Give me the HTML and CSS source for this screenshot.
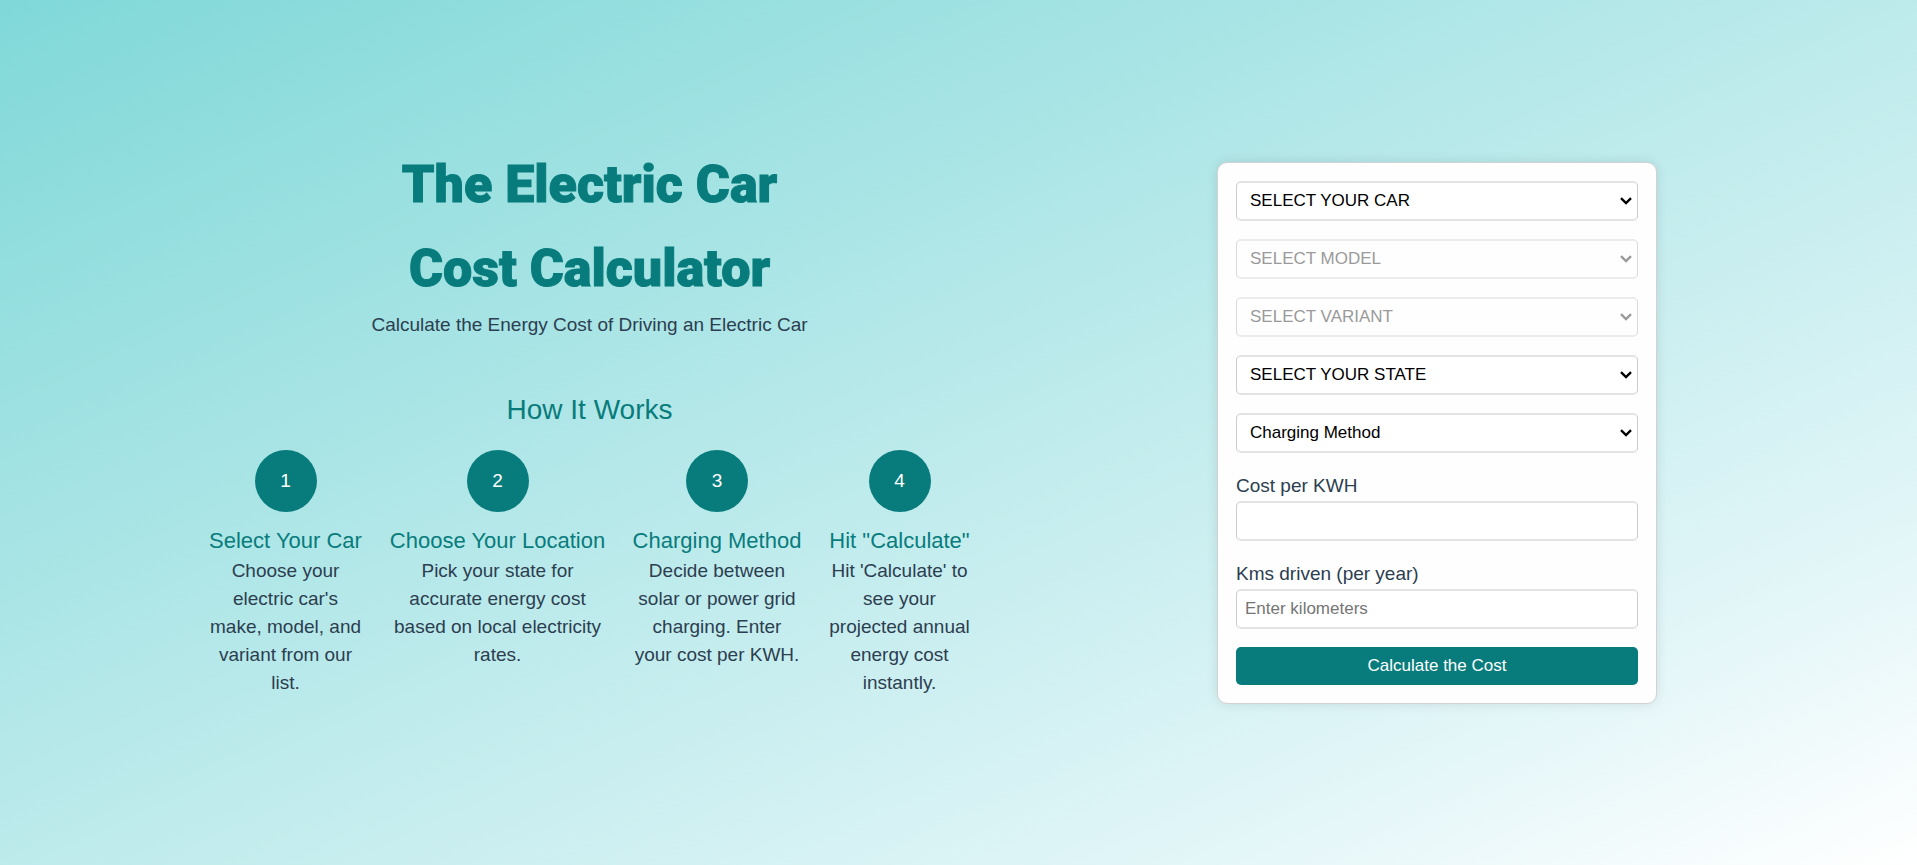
FILE: index.html
```html
<!DOCTYPE html>
<html lang="en">
<head>
<meta charset="utf-8">
<meta name="viewport" content="width=device-width, initial-scale=1">
<title>The Electric Car Cost Calculator</title>
<link rel="stylesheet" href="styles.css">
</head>
<body>
<main class="page">
  <section class="intro">
    <h1 class="title">The Electric Car<br>Cost Calculator</h1>
    <p class="subtitle">Calculate the Energy Cost of Driving an Electric Car</p>
    <h2 class="how">How It Works</h2>
    <div class="steps">
      <article class="step">
        <div class="step-number">1</div>
        <h3 class="step-title">Select Your Car</h3>
        <p class="step-text">Choose your electric car's make, model, and variant from our list.</p>
      </article>
      <article class="step">
        <div class="step-number">2</div>
        <h3 class="step-title">Choose Your Location</h3>
        <p class="step-text">Pick your state for accurate energy cost based on local electricity rates.</p>
      </article>
      <article class="step">
        <div class="step-number">3</div>
        <h3 class="step-title">Charging Method</h3>
        <p class="step-text">Decide between solar or power grid charging. Enter your cost per KWH.</p>
      </article>
      <article class="step">
        <div class="step-number">4</div>
        <h3 class="step-title">Hit "Calculate"</h3>
        <p class="step-text">Hit 'Calculate' to see your projected annual energy cost instantly.</p>
      </article>
    </div>
  </section>
  <form class="card">
    <select class="field select" aria-label="Car"><option>SELECT YOUR CAR</option></select>
    <select class="field select" aria-label="Model" disabled><option>SELECT MODEL</option></select>
    <select class="field select" aria-label="Variant" disabled><option>SELECT VARIANT</option></select>
    <select class="field select" aria-label="State"><option>SELECT YOUR STATE</option></select>
    <select class="field select" aria-label="Charging method"><option>Charging Method</option></select>
    <div class="group">
      <label class="label" for="cost">Cost per KWH</label>
      <input class="field input" id="cost" type="text">
    </div>
    <div class="group">
      <label class="label" for="kms">Kms driven (per year)</label>
      <input class="field input" id="kms" type="text" placeholder="Enter kilometers">
    </div>
    <button class="submit" type="button">Calculate the Cost</button>
  </form>
</main>
</body>
</html>
```

FILE: styles.css
```css
* {
  box-sizing: border-box;
}

body {
  margin: 0;
  color: #2c3e50;
  font-family: "Liberation Sans", Arial, sans-serif;
  font-size: 19px;
  line-height: 28px;
}

h1, h2, h3, p {
  margin: 0;
  font-weight: 400;
}

.page {
  display: grid;
  grid-template-columns: 208fr 763px 246fr 440px 260fr;
  align-items: center;
  min-height: 100vh;
  background: linear-gradient(to bottom right, #80d8d8, #e0f5f7 79%, #ffffff);
}

.intro {
  grid-column: 2;
  padding-bottom: 25px;
  text-align: center;
}

.title {
  color: #087c7c;
  font-family: Impact, Roboto, "Liberation Sans", sans-serif;
  font-size: 52px;
  font-weight: 900;
  line-height: 84px;
  -webkit-text-stroke: 1px #087c7c;
}

.how {
  margin: 50px 0 19px;
  color: #087c7c;
  font-size: 28px;
  line-height: 42px;
}

.steps {
  display: grid;
  grid-template-columns: 155fr 217fr 170fr 143fr;
  column-gap: 26px;
}

.step-number {
  display: grid;
  place-items: center;
  width: 62px;
  height: 62px;
  margin: 0 auto 13px;
  border-radius: 50%;
  background: #087c7c;
  color: #ffffff;
}

.step-title {
  color: #087c7c;
  font-size: 22px;
  line-height: 32px;
  white-space: nowrap;
}

.card {
  grid-column: 4;
  display: grid;
  gap: 18px;
  padding: 18px;
  border: 1px solid #d2d2d2;
  border-radius: 10px;
  background: #fefefe;
  box-shadow: 0 0 12px rgba(0, 0, 0, 0.1);
}

.field {
  display: block;
  width: 100%;
  height: 40px;
  border: solid;
  border-width: 2px 1px;
  border-color: #e3e3e3 #cccccc;
  border-radius: 5px;
  background: #ffffff;
  font-family: inherit;
  font-size: 17px;
}

.select {
  padding: 0 28px 0 13px;
  appearance: none;
  background: #ffffff url("data:image/svg+xml,%3Csvg xmlns='http://www.w3.org/2000/svg' width='12' height='8'%3E%3Cpath d='M1 1.2L6 6L11 1.2' fill='none' stroke='%23000' stroke-width='2.4'/%3E%3C/svg%3E") no-repeat right 5px center;
  color: #000000;
}

.select:disabled {
  background-image: url("data:image/svg+xml,%3Csvg xmlns='http://www.w3.org/2000/svg' width='12' height='8'%3E%3Cpath d='M1 1.2L6 6L11 1.2' fill='none' stroke='%23707070' stroke-width='2.4'/%3E%3C/svg%3E");
  color: #707070;
  opacity: 0.7;
}

.input {
  padding: 0 8px;
}

.label {
  display: block;
  line-height: 30px;
}

.submit {
  height: 38px;
  border: 0;
  border-radius: 5px;
  background: #087c7c;
  color: #ffffff;
  font-family: inherit;
  font-size: 17px;
}
```
